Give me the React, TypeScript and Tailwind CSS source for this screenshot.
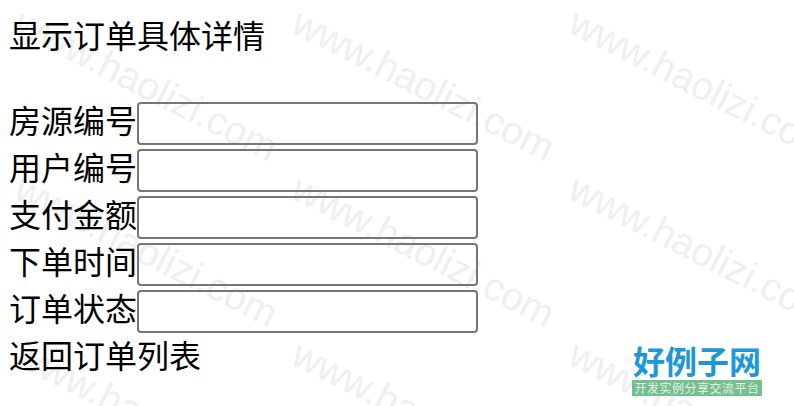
import React from "react";

const rows = ["房源编号", "用户编号", "支付金额", "下单时间", "订单状态"];
const marks = [0, 166, 332, 498].flatMap((top) => [28, 305, 582].map((left) => ({ top, left })));

function Watermarks() {
  return (
    <div className="absolute inset-0 overflow-hidden pointer-events-none">
      {marks.map((m, i) => (
        <div
          key={i}
          className="absolute origin-top-left rotate-[27deg] whitespace-nowrap text-[39px] leading-[44px] text-[#efefef] font-['Liberation_Sans',sans-serif]"
          style={{ top: m.top, left: m.left }}
        >
          www.haolizi.com
        </div>
      ))}
    </div>
  );
}

function Logo() {
  return (
    <div className="absolute left-[632px] top-[344px] w-[130px] flex flex-col">
      <div className="h-[36px] whitespace-nowrap text-[32px] leading-[32px] font-bold text-center text-[#1d97d8] font-['Noto_Sans_CJK_SC',sans-serif]">
        好例子网
      </div>
      <div className="h-[16px] whitespace-nowrap bg-[#73bf90] text-[12px] leading-[16px] tracking-[0.5px] text-center text-[#e4f2e8] font-['Noto_Sans_CJK_SC',sans-serif]">
        开发实例分享交流平台
      </div>
    </div>
  );
}

export default function App() {
  return (
    <div className="relative h-[406px] w-[794px] overflow-hidden bg-white px-[9px] text-[32px] leading-[37px] text-black font-['Liberation_Sans','Noto_Sans_CJK_SC',sans-serif]">
      <Watermarks />
      <div className="relative">
        <div className="pt-[19px] mb-[46px]">显示订单具体详情</div>
        <div className="flex flex-col gap-[4px]">
          {rows.map((label) => (
            <div key={label} className="flex h-[43px] items-center">
              <span className="w-[128px] -mt-[2px] whitespace-nowrap">{label}</span>
              <input className="h-[43px] w-[341px] rounded-[4px] border-2 border-[#767676] bg-transparent" />
            </div>
          ))}
        </div>
        <div className="mt-[6px]">返回订单列表</div>
      </div>
      <Logo />
    </div>
  );
}
